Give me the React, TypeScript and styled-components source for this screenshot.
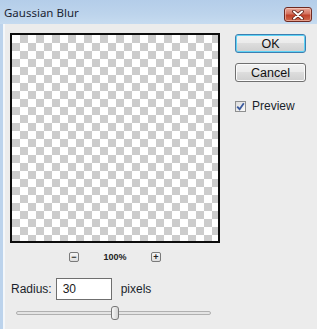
import React from "react";
import styled, { createGlobalStyle } from "styled-components";

const GlobalStyle = createGlobalStyle`
  html, body {
    margin: 0;
    padding: 0;
    background: #ececec;
  }
  * {
    box-sizing: border-box;
  }
`;

const Window = styled.div`
  width: 317px;
  height: 329px;
  display: flex;
  flex-direction: column;
  background: #ececec;
  font-family: "Liberation Sans", Arial, sans-serif;
  color: #1b1b1b;
  overflow: hidden;
`;

const TitleBar = styled.div`
  height: 24px;
  display: flex;
  align-items: flex-start;
  justify-content: space-between;
  padding: 0 5px 0 4px;
  background: linear-gradient(to bottom, #b4cde9 0%, #bdd4ec 60%, #c6dbf0 100%);
`;

const Title = styled.div`
  font-family: "Noto Sans", "Liberation Sans", sans-serif;
  font-size: 11.5px;
  line-height: 14px;
  margin-top: 6px;
  color: #1c2533;
`;

const CloseButton = styled.div`
  width: 28px;
  height: 15px;
  margin-top: 7px;
  border: 1px solid #6e2a22;
  border-radius: 3px;
  background: linear-gradient(to bottom, #e9a99b 0%, #d4725f 45%, #c0412a 55%, #cf6a4d 100%);
  display: flex;
  align-items: center;
  justify-content: center;
  box-shadow: inset 0 0 0 1px rgba(255, 220, 210, 0.5);
`;

const Body = styled.div`
  flex: 1;
  display: flex;
  gap: 15px;
  padding: 9px 0 0 7px;
  border-left: 3px solid #bcd3ec;
  box-shadow: inset 2px 0 0 #f4f7fa;
`;

const LeftColumn = styled.div`
  width: 210px;
  display: flex;
  flex-direction: column;
`;

const Preview = styled.div`
  width: 210px;
  height: 210px;
  border: 2px solid #0d0d0d;
  background: repeating-conic-gradient(#cccccc 0 25%, #ffffff 0 50%) 0 0 / 16px 16px;
`;

const ZoomRow = styled.div`
  margin-top: 8px;
  height: 12px;
  display: flex;
  align-items: center;
  justify-content: center;
  gap: 24px;
`;

const ZoomButton = styled.div`
  width: 10px;
  height: 10px;
  border: 1px solid #7a7a7a;
  border-radius: 2px;
  background: linear-gradient(to bottom, #f6f6f6, #dedede);
  display: flex;
  align-items: center;
  justify-content: center;
  font-size: 9px;
  line-height: 8px;
  font-weight: bold;
  color: #222;
`;

const ZoomLabel = styled.div`
  width: 24px;
  font-size: 9px;
  font-weight: bold;
  text-align: center;
  color: #222;
`;

const RadiusRow = styled.div`
  margin-top: 15px;
  display: flex;
  align-items: center;
  padding-left: 1px;
`;

const Label = styled.span`
  font-size: 12px;
  color: #1a1f2b;
`;

const NumberInput = styled.div`
  width: 56px;
  height: 22px;
  margin: 0 9px 0 4px;
  border: 1px solid #6f6f6f;
  background: #fff;
  padding: 3px 0 0 6px;
  font-size: 12px;
`;

const Slider = styled.div`
  position: relative;
  margin: 6px 0 0 6px;
  width: 195px;
  height: 14px;
  display: flex;
  align-items: center;
`;

const Track = styled.div`
  width: 100%;
  height: 4px;
  border: 1px solid #b0b0b0;
  border-radius: 2px;
  background: #e4e4e4;
`;

const Thumb = styled.div`
  position: absolute;
  top: 0;
  width: 8px;
  height: 14px;
  margin-left: -4px;
  border: 1px solid #777;
  border-radius: 3px;
  background: linear-gradient(to right, #f8f8f8, #d2d2d2);
`;

const RightColumn = styled.div`
  width: 71px;
  display: flex;
  flex-direction: column;
`;

const Button = styled.div<{ $default?: boolean }>`
  height: 19px;
  margin-top: ${p => (p.$default ? "1px" : "10px")};
  border: 1px solid ${p => (p.$default ? "#3c7fb1" : "#707070")};
  border-radius: 3px;
  background: linear-gradient(to bottom, #f2f2f2 0%, #ebebeb 45%, #dddddd 50%, #cfcfcf 100%);
  box-shadow: ${p => (p.$default ? "inset 0 0 0 1px #5fd3f5" : "inset 0 0 0 1px #fbfbfb")};
  display: flex;
  align-items: center;
  justify-content: center;
  font-size: 12.5px;
  color: #111;
`;

const CheckRow = styled.div`
  margin-top: 17px;
  display: flex;
  align-items: center;
  gap: 6px;
`;

const CheckBox = styled.div`
  width: 11px;
  height: 11px;
  border: 1px solid #8e8f8f;
  background: linear-gradient(to bottom right, #dcdcdc, #fafafa);
  display: flex;
  align-items: center;
  justify-content: center;
`;

export default function App() {
  const radius = 30;
  const sliderPos = 51;

  return (
    <>
      <GlobalStyle />
      <Window>
        <TitleBar>
          <Title>Gaussian Blur</Title>
          <CloseButton>
            <svg width="14" height="10" viewBox="0 0 14 10">
              <path
                d="M3 1.5 L11 8.5 M11 1.5 L3 8.5"
                stroke="#5a1c14"
                strokeWidth="3.6"
                strokeLinecap="round"
              />
              <path
                d="M3 1.5 L11 8.5 M11 1.5 L3 8.5"
                stroke="#ffffff"
                strokeWidth="2"
                strokeLinecap="round"
              />
            </svg>
          </CloseButton>
        </TitleBar>
        <Body>
          <LeftColumn>
            <Preview />
            <ZoomRow>
              <ZoomButton>−</ZoomButton>
              <ZoomLabel>100%</ZoomLabel>
              <ZoomButton>+</ZoomButton>
            </ZoomRow>
            <RadiusRow>
              <Label>Radius:</Label>
              <NumberInput>{radius}</NumberInput>
              <Label>pixels</Label>
            </RadiusRow>
            <Slider>
              <Track />
              <Thumb style={{ left: `${sliderPos}%` }} />
            </Slider>
          </LeftColumn>
          <RightColumn>
            <Button $default>OK</Button>
            <Button>Cancel</Button>
            <CheckRow>
              <CheckBox>
                <svg width="9" height="9" viewBox="0 0 9 9">
                  <path
                    d="M1.2 4.6 L3.6 7.2 L7.8 1.2"
                    fill="none"
                    stroke="#3a5a9e"
                    strokeWidth="1.8"
                  />
                </svg>
              </CheckBox>
              <Label>Preview</Label>
            </CheckRow>
          </RightColumn>
        </Body>
      </Window>
    </>
  );
}
